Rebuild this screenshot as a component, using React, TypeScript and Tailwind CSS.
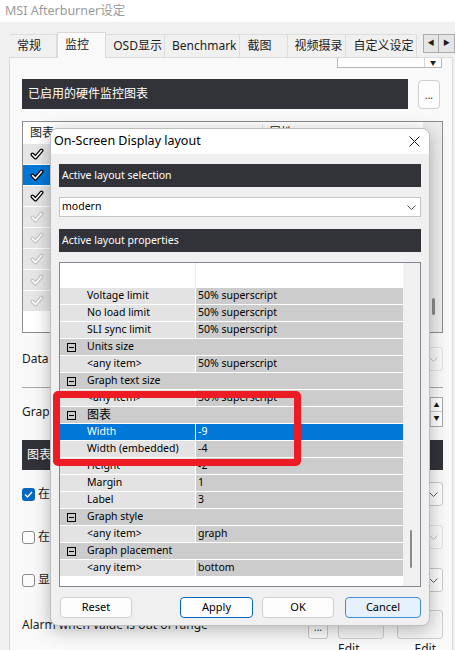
type Row =
  | { kind: "item"; name: string; value: string; selected?: boolean }
  | { kind: "cat"; name: string };

const rows: Row[] = [
  { kind: "item", name: "Voltage limit", value: "50% superscript" },
  { kind: "item", name: "No load limit", value: "50% superscript" },
  { kind: "item", name: "SLI sync limit", value: "50% superscript" },
  { kind: "cat", name: "Units size" },
  { kind: "item", name: "<any item>", value: "50% superscript" },
  { kind: "cat", name: "Graph text size" },
  { kind: "item", name: "<any item>", value: "50% superscript" },
  { kind: "cat", name: "图表" },
  { kind: "item", name: "Width", value: "-9", selected: true },
  { kind: "item", name: "Width (embedded)", value: "-4" },
  { kind: "item", name: "Height", value: "-2" },
  { kind: "item", name: "Margin", value: "1" },
  { kind: "item", name: "Label", value: "3" },
  { kind: "cat", name: "Graph style" },
  { kind: "item", name: "<any item>", value: "graph" },
  { kind: "cat", name: "Graph placement" },
  { kind: "item", name: "<any item>", value: "bottom" },
];

const tabs = [
  { label: "常规", w: "w-[48px]" },
  { label: "监控", w: "w-[50px]", active: true },
  { label: "OSD显示", w: "w-[60px]" },
  { label: "Benchmark", w: "w-[77px]" },
  { label: "截图", w: "w-[48px]" },
  { label: "视频摄录", w: "w-[60px]" },
  { label: "自定义设定", w: "w-[72px]" },
];

// list rows behind the dialog: 0 = black check, 1 = selected, 2 = greyed
const listRows = [0, 1, 0, 2, 2, 2, 2, 2];

function ListCheck({ faded }: { faded?: boolean }) {
  const d = "M2.5 6.5 L5.5 9.5 L11.5 2.5";
  return (
    <svg width="14" height="12" viewBox="0 0 14 12">
      <path d={d} fill="none" stroke={faded ? "#c6c6c6" : "#000"} strokeWidth="4" strokeLinecap="round" strokeLinejoin="round" />
      <path d={d} fill="none" stroke="#fff" strokeWidth="1.6" strokeLinecap="round" strokeLinejoin="round" />
    </svg>
  );
}

function Chevron({ color = "#555" }: { color?: string }) {
  return (
    <svg width="9" height="5" viewBox="0 0 9 5">
      <path d="M0.5 0.5 L4.5 4.5 L8.5 0.5" fill="none" stroke={color} strokeWidth="1" />
    </svg>
  );
}

function MinusBox() {
  return (
    <div className="flex h-[9px] w-[9px] items-center justify-center border border-black bg-transparent">
      <div className="h-px w-[5px] bg-black" />
    </div>
  );
}

function Combo({ w, faded }: { w: string; faded?: boolean }) {
  return (
    <div
      className={`flex h-full ${w} items-center justify-end rounded-[3px] border pr-[4px] ${
        faded ? "border-[#e3e3e3] bg-[#f9f9f9]" : "border-[#c9c9c9] bg-[#fdfdfd]"
      }`}
    >
      <Chevron color={faded ? "#c4c4c4" : "#606060"} />
    </div>
  );
}

function Checkbox({ checked }: { checked?: boolean }) {
  return checked ? (
    <div className="flex h-[13px] w-[13px] items-center justify-center rounded-[3px] bg-[#0067c0]">
      <svg width="9" height="7" viewBox="0 0 9 7">
        <path d="M1 3.5 L3.5 6 L8 1" fill="none" stroke="#fff" strokeWidth="1.3" />
      </svg>
    </div>
  ) : (
    <div className="h-[13px] w-[13px] rounded-[3px] border border-[#8a8a8a] bg-[#fbfbfb]" />
  );
}

function DialogButton({ label, w, kind }: { label: string; w: string; kind?: "apply" | "cancel" }) {
  const look =
    kind === "apply"
      ? "border-[#0067c0] bg-white"
      : kind === "cancel"
        ? "border-[#3d8ee0] bg-[#e5f1fb]"
        : "border-[#d0d0d0] bg-[#fdfdfd]";
  return (
    <div className={`flex h-[21px] ${w} items-center justify-center rounded-[4px] border text-[11px] text-black ${look}`}>
      {label}
    </div>
  );
}

export default function App() {
  return (
    <div className="relative h-[650px] w-[455px] overflow-hidden bg-[#f0f0f0] font-['Noto_Sans','Noto_Sans_CJK_SC',sans-serif] text-[#1b1b1b]">
      {/* window title */}
      <div className="h-[22px] bg-white pl-[5px] text-[12.5px] leading-[22px] text-[#9a9a9a]">MSI Afterburner设定</div>

      {/* tabs */}
      <div className="flex h-[35px] items-end pl-[10px] text-[12px]">
        {tabs.map((t) =>
          t.active ? (
            <div
              key={t.label}
              className={`relative z-10 -mb-px flex h-[26px] ${t.w} items-start border-x border-t border-[#d9d9d9] bg-[#f9f9f9] pl-[7px] pt-[3px]`}
            >
              {t.label}
            </div>
          ) : (
            <div
              key={t.label}
              className={`flex h-[23px] ${t.w} items-center border-r border-t border-[#dddddd] pl-[7px]`}
            >
              {t.label}
            </div>
          )
        )}
        <div className="ml-[6px] mt-[12px] flex self-start">
          <div className="flex h-[19px] w-[16px] items-center justify-center border border-[#adadad] bg-[#e5e5e5] text-[7px]">◀</div>
          <div className="flex h-[19px] w-[16px] items-center justify-center border border-l-0 border-[#adadad] bg-[#e5e5e5] text-[7px]">▶</div>
        </div>
      </div>

      {/* tab page */}
      <div className="ml-[9px] h-[600px] w-[444px] border border-[#dadada] bg-[#f9f9f9] pl-[12px] pr-[9px] text-[12px]">
        <div className="flex justify-end">
          <div className="mr-[1px] flex h-[10px] w-[105px] justify-end border-x border-b border-[#b5b5b5] bg-white">
            <div className="flex w-[17px] items-end justify-center border-l border-[#d5d5d5] text-[6px] leading-[7px]">▼</div>
          </div>
        </div>

        <div className="mt-[11px] flex">
          <div className="flex h-[30px] w-[386px] items-center bg-[#323338] pl-[6px] text-white">已启用的硬件监控图表</div>
          <div className="ml-[10px] mt-px flex h-[29px] w-[22px] items-center justify-center rounded-[4px] border border-[#d0d0d0] bg-[#fdfdfd] text-[10px] leading-none">
            ...
          </div>
        </div>

        {/* monitored graphs list */}
        <div className="mt-[12px] flex h-[212px] w-[421px] border border-[#8c8c8c] bg-white">
          <div className="flex flex-1 flex-col">
            <div className="flex h-[22px] items-center">
              <div className="w-[240px] border-r border-[#e5e5e5] pl-[7px]">图表</div>
              <div className="pl-[6px]">属性</div>
            </div>
            {listRows.map((r, i) => (
              <div key={i} className={`flex h-[21px] border-b border-white ${r === 1 ? "bg-[#0078d7]" : ""}`}>
                <div className={`flex w-[27px] items-center justify-center ${r === 1 ? "" : "bg-[#e6e6e6]"}`}>
                  <ListCheck faded={r === 2} />
                </div>
              </div>
            ))}
          </div>
          <div className="relative w-[19px] bg-[#ededed]">
            <div className="absolute left-[9px] top-[176px] h-[17px] w-[3px] rounded-full bg-[#8a8a8a]" />
          </div>
        </div>

        <div className="mt-[14px] flex h-[24px] items-center justify-between">
          <span>Data</span>
          <Combo w="w-[140px]" faded />
        </div>

        <div className="mt-[16px] h-px bg-[#a8a8a8]" />

        <div className="mt-[9px] flex h-[30px] items-center justify-between">
          <span>Graph limits</span>
          <div className="flex h-full w-[120px] border border-[#a8a8a8] bg-white">
            <div className="flex-1" />
            <div className="flex w-[12px] flex-col justify-center gap-0 border-l border-[#c8c8c8]">
              <div className="flex h-[12px] items-center justify-center border-b border-[#c8c8c8] text-[6px]">▲</div>
              <div className="flex h-[12px] items-center justify-center text-[6px]">▼</div>
            </div>
          </div>
        </div>

        <div className="mt-[13px] flex h-[30px] items-center bg-[#323338] pl-[5px] text-white">图表使用</div>

        <div className="mt-[12px] flex h-[24px] items-center justify-between">
          <div className="flex items-center gap-[3px]">
            <Checkbox checked />
            <span>在屏幕显示中显示</span>
          </div>
          <Combo w="w-[120px]" />
        </div>
        <div className="mt-[19px] flex h-[24px] items-center justify-between">
          <div className="flex items-center gap-[3px]">
            <Checkbox />
            <span>在托盘图标中显示</span>
          </div>
          <Combo w="w-[120px]" faded />
        </div>
        <div className="mt-[19px] flex h-[24px] items-center justify-between">
          <div className="flex items-center gap-[3px]">
            <Checkbox />
            <span>显示在键盘LCD上</span>
          </div>
          <Combo w="w-[120px]" />
        </div>

        <div className="mt-[18px] flex h-[29px] items-center">
          <span className="flex-1">Alarm when value is out of range</span>
          <div className="mt-[6px] flex h-[22px] w-[20px] items-center justify-center rounded-[3px] border border-[#c8c8c8] bg-[#fdfdfd] text-[10px]">
            ...
          </div>
          <div className="ml-[10px] h-[29px] w-[46px] rounded-[3px] border border-[#cfcfcf] bg-[#f6f6f6]" />
          <div className="ml-[13px] h-[29px] w-[46px] rounded-[3px] border border-[#cfcfcf] bg-[#f6f6f6]" />
        </div>
        <div className="flex pl-[316px] text-[12px] leading-[20px]">
          <span>Edit</span>
          <span className="ml-[55px]">Edit</span>
        </div>
      </div>

      {/* On-Screen Display layout dialog */}
      <div className="absolute left-[50px] top-[128px] z-20 flex h-[498px] w-[380px] flex-col overflow-hidden rounded-[8px] border border-[#bdbdbd] bg-[#f0f0f0] shadow-[0_4px_18px_rgba(0,0,0,0.28)]">
        <div className="flex h-[25px] items-center justify-between bg-white pl-[3px] pr-[9px]">
          <span className="text-[12.5px] text-black">On-Screen Display layout</span>
          <svg width="11" height="11" viewBox="0 0 11 11">
            <path d="M0.5 0.5 L10.5 10.5 M10.5 0.5 L0.5 10.5" stroke="#1a1a1a" strokeWidth="1" />
          </svg>
        </div>

        <div className="flex flex-col px-[8px] pt-[10px] text-[10.5px]">
          <div className="flex h-[23px] items-center bg-[#323338] pl-[3px] text-white">Active layout selection</div>

          <div className="mt-[10px] flex h-[20px] items-center justify-between border border-[#c4c4c4] bg-white pl-[2px] pr-[4px] text-black">
            <span>modern</span>
            <Chevron />
          </div>

          <div className="mt-[12px] flex h-[23px] items-center bg-[#323338] pl-[3px] text-white">Active layout properties</div>

          <div className="mt-[10px] flex h-[325px] border border-[#828790] bg-white">
            <div className="flex w-[343px] flex-col">
              <div className="flex h-[25px]">
                <div className="w-[136px] border-r border-[#e6e6e6]" />
              </div>
              {rows.map((r, i) =>
                r.kind === "cat" ? (
                  <div key={i} className="flex h-[17px] items-center border-b border-white bg-[#cccccc] pl-[7px] text-black">
                    <MinusBox />
                    <span className={`ml-[11px] ${r.name === "图表" ? "text-[12px]" : ""}`}>{r.name}</span>
                  </div>
                ) : (
                  <div
                    key={i}
                    className={`flex h-[17px] border-b border-white ${r.selected ? "bg-[#0078d7] text-white" : "text-black"}`}
                  >
                    <div className={`flex w-[136px] items-center border-r border-white pl-[27px] ${r.selected ? "" : "bg-[#e3e3e3]"}`}>
                      {r.name}
                    </div>
                    <div className={`flex flex-1 items-center pl-[2px] ${r.selected ? "" : "bg-[#cccccc]"}`}>{r.value}</div>
                  </div>
                )
              )}
            </div>
            <div className="relative flex-1 bg-[#f0f0f0]">
              <div className="absolute left-[7px] top-[267px] h-[38px] w-[2px] rounded-full bg-[#8a8a8a]" />
            </div>
          </div>

          <div className="mt-[10px] flex">
            <div className="ml-px">
              <DialogButton label="Reset" w="w-[72px]" />
            </div>
            <div className="ml-[48px]">
              <DialogButton label="Apply" w="w-[73px]" kind="apply" />
            </div>
            <div className="ml-[9px]">
              <DialogButton label="OK" w="w-[72px]" />
            </div>
            <div className="ml-[11px]">
              <DialogButton label="Cancel" w="w-[76px]" kind="cancel" />
            </div>
          </div>
        </div>
      </div>

      {/* red annotation frame */}
      <div className="absolute left-[53px] top-[391px] z-30 h-[75px] w-[248px] rounded-[5px] border-[7px] border-[#ed1c24]" />
    </div>
  );
}
